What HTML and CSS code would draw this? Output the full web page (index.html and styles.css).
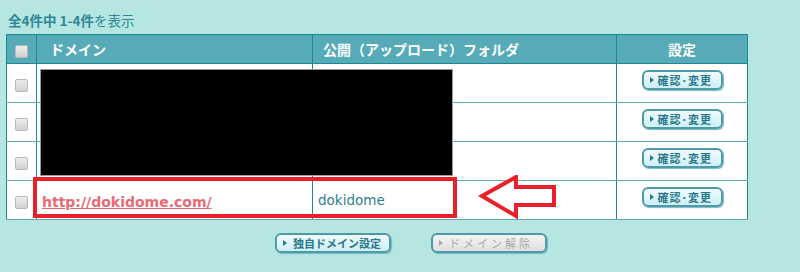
FILE: index.html
```html
<!DOCTYPE html>
<html lang="ja">
<head>
    <meta charset="UTF-8">
    <title>ドメイン設定</title>
    <link rel="stylesheet" href="styles.css">
</head>
<body>

<div class="wrap">
    <p class="count"><strong>全4件中 1-4件</strong>を表示</p>

    <table class="list">
        <tr>
            <th class="c-check"><span class="box"></span></th>
            <th class="c-domain">ドメイン</th>
            <th class="c-folder">公開（アップロード）フォルダ</th>
            <th class="c-set">設定</th>
        </tr>
        <tr>
            <td class="c-check"><span class="box"></span></td>
            <td></td>
            <td></td>
            <td class="c-set"><span class="btn">確認･変更</span></td>
        </tr>
        <tr>
            <td class="c-check"><span class="box"></span></td>
            <td></td>
            <td></td>
            <td class="c-set"><span class="btn">確認･変更</span></td>
        </tr>
        <tr>
            <td class="c-check"><span class="box"></span></td>
            <td></td>
            <td></td>
            <td class="c-set"><span class="btn">確認･変更</span></td>
        </tr>
        <tr>
            <td class="c-check"><span class="box"></span></td>
            <td><a class="url" href="#">http://dokidome.com/</a></td>
            <td class="folder">dokidome</td>
            <td class="c-set"><span class="btn">確認･変更</span></td>
        </tr>
    </table>

    <div class="actions">
        <span class="btn wide">独自ドメイン設定</span>
        <span class="btn wide off">ドメイン解除</span>
    </div>

    <!-- annotations over the screenshot -->
    <div class="mask"></div>
    <div class="mark"></div>
    <svg class="arrow" width="80" height="46" viewBox="0 0 80 46">
        <polygon points="4,21 38,2 38,12 76,12 76,30 38,30 38,41" fill="none" stroke="#e8202a" stroke-width="4" stroke-linejoin="miter"/>
    </svg>
</div>

</body>
</html>
```

FILE: styles.css
```css
body {
    margin: 0;
    background: #b5e6e2;
    font-family: "Noto Sans CJK JP", "Noto Sans", sans-serif;
}
.wrap {
    position: relative;
    padding: 0 6px;
    height: 272px;
}
.count {
    margin: 0;
    padding-top: 10px;
    height: 24px;
    font-size: 13.5px;
    line-height: 20px;
    color: #2f8795;
    padding-left: 2px;
}
.count strong {
    font-weight: bold;
}
.list {
    border-collapse: collapse;
    width: 742px;
    background: #ffffff;
}
.list th {
    background: #57abb9;
    color: #ffffff;
    font-size: 14px;
    font-weight: bold;
    height: 28px;
    padding: 0;
    text-align: left;
    border: 1px solid #1d8795;
}
.list td {
    height: 38px;
    padding: 0;
    border-top: 1px solid #5fa9b4;
    border-bottom: 1px solid #5fa9b4;
    border-left: 1px solid #1d8795;
    border-right: 1px solid #1d8795;
}
.c-check {
    width: 29px;
    text-align: center !important;
}
.c-domain {
    width: 262px;
    padding-left: 13px !important;
}
.c-folder {
    width: 293px;
    padding-left: 10px !important;
}
.c-set {
    text-align: center !important;
}
.list td.c-set {
    vertical-align: top;
}
.box {
    display: inline-block;
    width: 11px;
    height: 11px;
    border: 1px solid #b8b8b8;
    border-radius: 2px;
    background: linear-gradient(#ececec, #d2d2d2);
    vertical-align: middle;
}
.url {
    margin-left: 5px;
    font-family: "DejaVu Sans", Verdana, sans-serif;
    font-size: 14px;
    font-weight: bold;
    color: #ea6a74;
}
.folder {
    padding-left: 5px !important;
    font-family: "DejaVu Sans", Verdana, sans-serif;
    font-size: 13.5px;
    color: #2f7f8d;
}
.btn {
    display: inline-block;
    box-sizing: border-box;
    width: 81px;
    height: 20px;
    line-height: 16px;
    padding: 0 0 0 14px;
    position: relative;
    border: 2px solid #4f9aa8;
    border-radius: 6px;
    background: linear-gradient(#f0fbfd, #cdeff6);
    box-shadow: 1px 1px 1px #7bb7c1;
    color: #26788a;
    font-size: 11px;
    font-weight: bold;
    letter-spacing: 1px;
    white-space: nowrap;
    text-align: left;
    vertical-align: middle;
}
.list .btn {
    display: block;
    margin: 6px auto 0;
}
.btn::before {
    content: "";
    position: absolute;
    left: 6px;
    top: 5px;
    border-left: 4px solid #26788a;
    border-top: 3px solid transparent;
    border-bottom: 3px solid transparent;
}
.actions {
    padding-top: 13px;
    padding-left: 269px;
    display: flex;
    gap: 40px;
}
.btn.wide {
    width: 116px;
    padding-left: 16px;
    letter-spacing: 0;
}
.btn.off {
    background: linear-gradient(#f4f4f4, #e0e0e0);
    color: #a9a9a9;
    font-weight: normal;
    letter-spacing: 3px;
}
.btn.off::before {
    border-left-color: #a9a9a9;
}
.mask {
    position: absolute;
    left: 40px;
    top: 69px;
    width: 411px;
    height: 105px;
    background: #000000;
    border: 1px solid #9a9a9a;
}
.mark {
    position: absolute;
    left: 33px;
    top: 177px;
    width: 416px;
    height: 33px;
    border: 4px solid #e8202a;
}
.arrow {
    position: absolute;
    left: 478px;
    top: 175px;
}
```
